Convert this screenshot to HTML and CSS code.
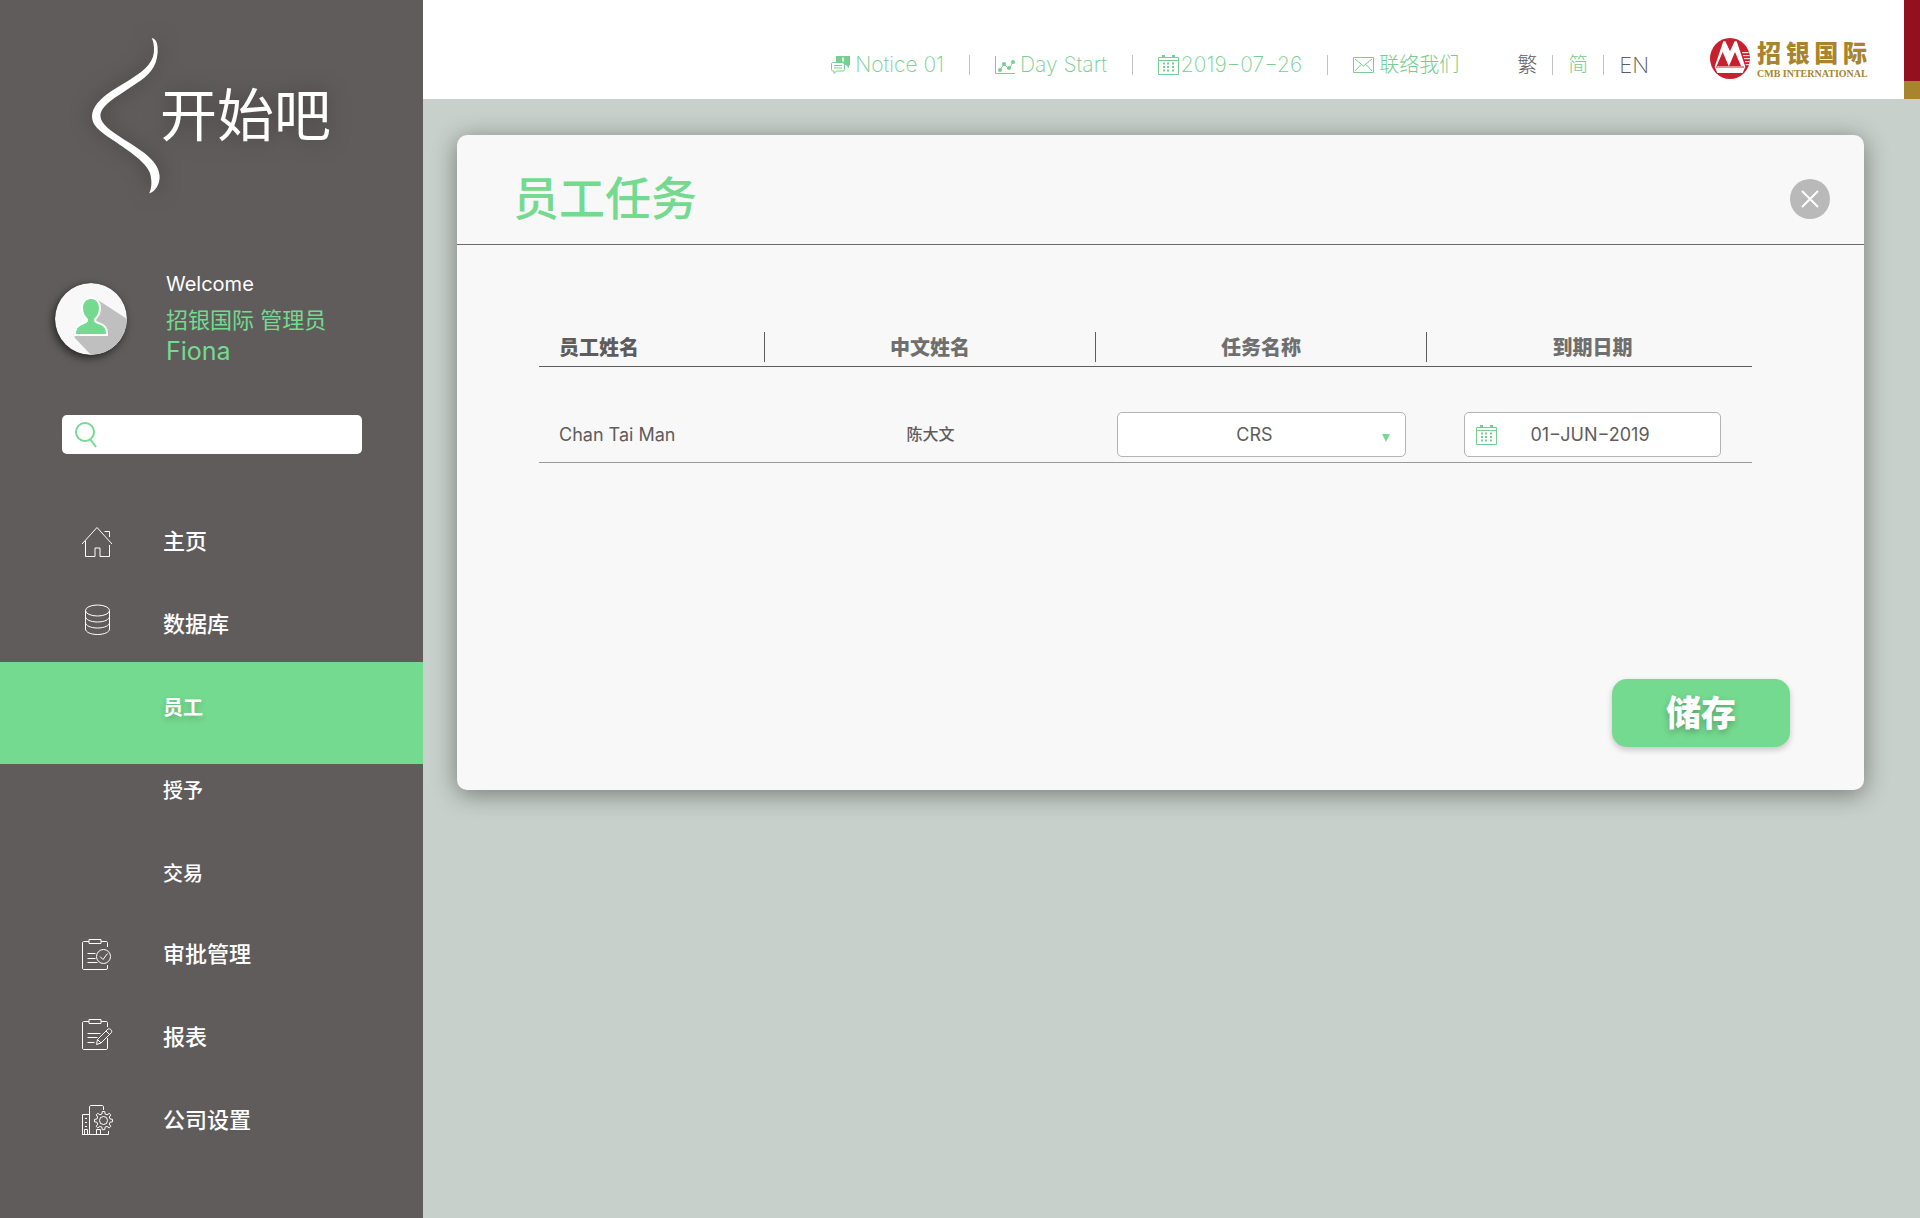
FILE: index.html
```html
<!DOCTYPE html>
<html lang="zh-CN">
<head>
<meta charset="utf-8">
<meta name="viewport" content="width=device-width, initial-scale=1">
<title>员工任务</title>
<link rel="stylesheet" href="styles.css">
</head>
<body>
<svg class="symbols" aria-hidden="true">
  <symbol id="calendar" viewBox="0 0 21 20">
    <path d="M.5 2.500h20v17H.5zM.5 5.500h20" fill="none" stroke="currentColor"/>
    <path d="M4 0h3v3H4zM14 0h3v3h-3z" fill="currentColor"/>
    <path d="M5 8.500h2M9 8.500h2M14 8.500h2M5 12h2M9 12h2M14 12h2M5 15.500h2M9 15.500h2M14 15.500h2" fill="none" stroke="currentColor" stroke-width="2"/>
  </symbol>
</svg>
<div class="app">
  <aside class="sidebar">
    <a class="logo" href="#">
      <svg class="logo-mark" viewBox="157 87 203 465" aria-hidden="true">
        <path fill="currentColor" d="M335 87C350 90 354 105 353 130C350 175 325 200 290 222L240 255C200 280 182 300 182 319C183 345 215 365 250 388C310 425 357 455 359 500C359 525 345 545 328 551C335 535 337 515 330 490C320 460 270 425 220 392C175 362 157 345 157 320C157 295 180 268 215 245L270 211C320 180 345 155 342 115C341 100 338 92 335 87Z"/>
      </svg>
      <span class="logo-text">开始吧</span>
    </a>

    <section class="profile">
      <svg class="avatar" viewBox="0 0 72 72" aria-hidden="true">
        <defs><clipPath id="disc"><circle cx="36" cy="36" r="36"/></clipPath></defs>
        <circle cx="36" cy="36" r="36" fill="#f8f8f8"/>
        <path clip-path="url(#disc)" d="M43 17L72 36V72H36L19 54L36 40Z" fill="#bfbfbf"/>
        <path d="M36 16c5 0 8 4 8 9 0 5-2 8-5 11 0 3 1 4 4 5 6 2 8 4 8 10H21c0-6 3-8 8-10 3-1 4-2 4-5-3-3-5-6-5-11 0-5 3-9 8-9z" fill="#74da8f" stroke="#fff" stroke-width="4" paint-order="stroke"/>
      </svg>
      <div class="profile-text">
        <p class="welcome">Welcome</p>
        <p class="role">招银国际 管理员</p>
        <p class="name">Fiona</p>
      </div>
    </section>

    <form class="search" role="search">
      <label for="search"><svg viewBox="0 0 22 26" role="img" aria-label="搜索"><circle cx="10" cy="10" r="9" fill="none" stroke="currentColor" stroke-width="2"/><path d="M15.500 17.500L21 25" fill="none" stroke="currentColor" stroke-width="2"/></svg></label>
      <input id="search" type="search">
    </form>

    <nav class="menu">
      <ul>
        <li><a href="#">
          <svg viewBox="0 0 32 40" aria-hidden="true"><path d="M1 23L16 6.500L31 23M4.500 20v15.500H14V27h5v8.500h9.500V24M23.500 10.500h5V16"/></svg>
          主页</a></li>
        <li><a href="#">
          <svg viewBox="0 0 32 40" aria-hidden="true"><ellipse cx="16.500" cy="6.500" rx="12" ry="5.500"/><path d="M4.500 6.500V25c0 3 5 5.500 12 5.500s12-2.500 12-5.500V6.500M4.500 12.500c0 3 5 5.500 12 5.500s12-2.500 12-5.500M4.500 18.500c0 3 5 5.500 12 5.500s12-2.500 12-5.500"/></svg>
          数据库</a>
          <ul class="submenu">
            <li class="active"><a href="#" aria-current="page">员工</a></li>
            <li><a href="#">授予</a></li>
            <li><a href="#">交易</a></li>
          </ul>
        </li>
        <li><a href="#">
          <svg viewBox="0 0 32 40" aria-hidden="true"><path d="M8 7.500H3c-1 0-1.500.5-1.500 1.500v25c0 1 .5 1.500 1.500 1.500h22c1 0 1.500-.5 1.500-1.500v-3M20 7.500h5c1 0 1.500.5 1.500 1.500v4M8 5.500h12v4H8zM6.500 19.500h8M6.500 24.500h8M6.500 28.500h10"/><circle cx="22.500" cy="22.500" r="7"/><path d="M19 22.500l3 3 4.500-6"/></svg>
          审批管理</a></li>
        <li><a href="#">
          <svg viewBox="0 0 32 40" aria-hidden="true"><path d="M8 4.500H3c-1 0-1.500.5-1.500 1.500v25c0 1 .5 1.500 1.500 1.500h22c1 0 1.500-.5 1.500-1.500V21M20 4.500h5c1 0 1.500.5 1.500 1.500v4M8 2.500h12v4H8zM6.500 16.500h13M6.500 20.500h10M6.500 25.500h7M15.500 27.500l1-5L27 12c2-1 4.500 1.500 3.500 3.500L20 26zM25 14l3.500 3.500M16.500 22.500L20 26"/></svg>
          报表</a></li>
        <li><a href="#">
          <svg viewBox="0 0 32 40" aria-hidden="true"><path d="M1 34.500h26.500V31M1.500 34V14.500h7M8.500 34V7c0-1 .5-1.500 1.500-1.500h11c1 0 1.500.5 1.500 1.500v3M3.500 34v-4.500h3V34M15.500 34v-4.500h4V34"/><path d="M5 18v9" stroke-width="2" stroke-dasharray="1 3"/><circle cx="22.500" cy="20.500" r="4"/><path d="M21.300 11.500h2.400l.4 2.500 2 .8 2.100-1.500 1.600 1.600-1.500 2.100.8 2 2.400.4v2.400l-2.400.4-.8 2 1.500 2.100-1.600 1.600-2.100-1.500-2 .8-.4 2.500h-2.400l-.4-2.500-2-.8-2.100 1.500-1.600-1.600 1.500-2.100-.8-2-2.400-.4v-2.400l2.400-.4.8-2-1.500-2.100 1.600-1.600 2.100 1.500 2-.8z"/></svg>
          公司设置</a></li>
      </ul>
    </nav>
  </aside>

  <div class="content">
    <header class="topbar">
      <div class="topbar-inner">
        <nav class="links">
          <a href="#"><svg class="notice-icon" viewBox="0 0 19 18" aria-hidden="true"><path d="M5 0h14v9h-1v3l-3-3H5z" fill="currentColor"/><path d="M12 1.500v4M12 6.500v1.500" stroke="#fff" stroke-width="1.500"/><path d="M2 6.500h10l1.500 2v5c0 1-.5 1.500-1.500 1.500H5.500L3 17.500V15H2C1 15 .5 14.500 .5 13.500V8C.5 7 1 6.500 2 6.500z" fill="#fff" stroke="currentColor"/><path d="M3 9.500h8M3 12h8" stroke="currentColor"/></svg>Notice 01</a>
          <a href="#"><svg class="chart-icon" viewBox="0 0 20 20" aria-hidden="true"><path d="M.5 1v17.500H20" fill="none" stroke="currentColor"/><path d="M5 15l4-6 5 5 4-7" fill="none" stroke="currentColor"/><g fill="currentColor"><circle cx="5" cy="15" r="2"/><circle cx="9" cy="9" r="2"/><circle cx="14" cy="13" r="2"/><circle cx="18" cy="7" r="2"/></g></svg>Day Start</a>
          <a class="date" href="#"><svg class="calendar-icon"><use href="#calendar"/></svg>2019−07−26</a>
          <a class="cjk" href="#"><svg class="mail-icon" viewBox="0 0 21 16" aria-hidden="true"><path d="M.5.5h20v15H.5zM2 2l8.500 7L19 2M2 14l6-6.500M19 14l-6-6.500" fill="none" stroke="currentColor"/></svg>联络我们</a>
        </nav>
        <nav class="languages">
          <a class="cjk" href="#">繁</a>
          <a class="cjk current" href="#">简</a>
          <a href="#">EN</a>
        </nav>
        <a class="bank" href="#">
          <svg class="bank-mark" viewBox="0 0 120 123" aria-hidden="true">
            <ellipse cx="60" cy="61.500" rx="60" ry="61.500" fill="#c8202f"/>
            <path d="M14 86L40 10H46L60 40L74 10H80L106 86L98 105H22Z" fill="#fff"/>
            <path d="M20 84L38 42L56 84zM57 84L75 42L93 84z" fill="#c8202f"/>
            <path d="M18 87H102" stroke="#c8202f" stroke-width="3"/>
            <path d="M96 44H116M99 53H119M102 62H120M105 71H119M107 80H117" stroke="#fff" stroke-width="3"/>
          </svg>
          <span class="bank-name">
            <span class="bank-cn"><span>招</span><span>银</span><span>国</span><span>际</span></span>
            <span class="bank-en">CMB INTERNATIONAL</span>
          </span>
        </a>
      </div>
      <div class="stripe"></div>
    </header>

    <main>
      <section class="panel">
        <header class="panel-head">
          <h1>员工任务</h1>
          <button class="close" type="button" aria-label="关闭"><svg viewBox="0 0 40 40" aria-hidden="true"><path d="M12 12l16 16M28 12L12 28" stroke="#fff" stroke-width="2"/></svg></button>
        </header>
        <form class="panel-body">
          <table>
            <colgroup><col class="c-name"><col class="c-mid"><col class="c-mid"><col></colgroup>
            <thead>
              <tr>
                <th scope="col"><span>员工姓名</span></th>
                <th scope="col"><span>中文姓名</span></th>
                <th scope="col" id="task-label"><span>任务名称</span></th>
                <th scope="col" id="due-label"><span>到期日期</span></th>
              </tr>
            </thead>
            <tbody>
              <tr>
                <td>Chan Tai Man</td>
                <td class="cn">陈大文</td>
                <td>
                  <div class="field task">
                    <select aria-labelledby="task-label"><option>CRS</option></select>
                    <svg class="arrow" viewBox="0 0 8 8" aria-hidden="true"><path d="M0 0h8L4 8z" fill="currentColor"/></svg>
                  </div>
                </td>
                <td>
                  <div class="field due">
                    <svg class="calendar-icon"><use href="#calendar"/></svg>
                    <input type="text" value="01−JUN−2019" aria-labelledby="due-label">
                  </div>
                </td>
              </tr>
            </tbody>
          </table>
          <div class="actions"><button class="save" type="submit">储存</button></div>
        </form>
      </section>
    </main>
  </div>
</div>
</body>
</html>
```
FILE: styles.css
```css
:root {
  --green: #74da8f;
  --link: #78cd90;
  --dark: #605c5c;
  --gold: #a8842f;
}

* { box-sizing: border-box; }

body {
  margin: 0;
  font-family: Inter, "Noto Sans CJK SC", sans-serif;
  font-size: 18px;
  color: var(--dark);
  background: #c8d0cb;
}

h1, p, ul { margin: 0; padding: 0; }
ul { list-style: none; }
a { color: inherit; text-decoration: none; }
button, input, select { font: inherit; color: inherit; }
.symbols { display: none; }

.app {
  display: flex;
  min-height: 100vh;
}

/* Sidebar */
.sidebar {
  flex: 0 0 423px;
  min-width: 0;
  padding-top: 38px;
  background: var(--dark);
  color: #fff;
}

.logo {
  display: flex;
  align-items: center;
  height: 156px;
  padding-left: 92px;
  filter: drop-shadow(0 0 10px rgba(50, 45, 40, .6));
}
.logo-mark { flex: none; width: 68px; height: 156px; }
.logo-text { font-size: 57px; font-weight: 400; line-height: 60px; }

.profile {
  display: flex;
  align-items: center;
  gap: 39px;
  padding-left: 55px;
  margin-top: 76px;
}
.avatar {
  width: 72px;
  height: 72px;
  margin-top: 2px;
  border-radius: 50%;
  box-shadow: -2px 3px 8px rgba(0, 0, 0, .6);
}
.welcome { font-size: 20px; line-height: 28px; margin-bottom: 6px; }
.role { font-size: 22px; line-height: 32px; color: var(--green); }
.name { font-size: 25px; line-height: 30px; color: var(--green); }

.search {
  display: flex;
  align-items: center;
  gap: 8px;
  height: 39px;
  margin: 49px 61px 0 62px;
  padding: 0 13px;
  border-radius: 5px;
  background: #fff;
  color: var(--green);
}
.search label { display: flex; }
.search svg { width: 22px; height: 26px; }
.search input {
  flex: 1;
  min-width: 0;
  border: 0;
  outline: 0;
  background: none;
  color: var(--dark);
}

.menu { margin-top: 46px; }
.menu a {
  display: flex;
  align-items: center;
  gap: 50px;
  height: 83px;
  padding: 0 0 6px 81px;
  font-size: 22px;
  font-weight: 500;
}
.menu svg {
  width: 32px;
  height: 40px;
  margin-top: 4px;
  fill: none;
  stroke: #fff;
}
.submenu { margin-bottom: -2px; }
.submenu a { padding: 0 0 3px 163px; font-size: 20px; }
.submenu .active {
  margin: -4px 0 -15px;
  padding: 4px 0 15px;
  background: var(--green);
}
.submenu .active a { font-weight: 700; text-shadow: 0 3px 6px rgba(0, 0, 0, .2); }

/* Top bar */
.content { flex: 1; min-width: 0; }
.topbar {
  display: flex;
  height: 99px;
  background: #fff;
}
.topbar-inner {
  flex: 1;
  display: flex;
  justify-content: flex-end;
  align-items: center;
  padding: 30px 37px 0 0;
}
.stripe {
  width: 16px;
  background: linear-gradient(#93111e 81px, var(--gold) 81px);
}
.links, .languages {
  display: flex;
  align-items: center;
  font-size: 21px;
  line-height: 20px;
  font-weight: 200;
}
.links .cjk, .languages .cjk { font-size: 20px; }
.links a {
  display: flex;
  align-items: center;
  gap: 5px;
  padding: 0 25px;
  color: var(--link);
}
.links .date { gap: 2px; }
.links a:last-child { padding-right: 0; }
.links a + a, .languages a + a { border-left: 1px solid #c0c4c1; }
.languages { margin-left: 58px; font-size: 22px; }
.languages a { padding: 0 15px; }
.languages a:first-child { padding-left: 0; }
.languages a:last-child { padding-right: 0; }
.languages .current { color: var(--link); }
.notice-icon { width: 19px; height: 18px; }
.chart-icon { width: 20px; height: 20px; }
.calendar-icon { width: 21px; height: 20px; color: var(--link); }
.mail-icon { width: 21px; height: 16px; }

.bank {
  display: flex;
  gap: 7px;
  margin: -13px 0 0 61px;
  color: var(--gold);
}
.bank-mark { width: 40px; height: 41px; }
.bank-name { display: flex; flex-direction: column; width: 110px; }
.bank-cn {
  display: flex;
  justify-content: space-between;
  font-size: 24px;
  line-height: 32px;
  font-weight: 900;
}
.bank-en {
  font: bold 10px/8px "Liberation Serif", serif;
  white-space: nowrap;
}

/* Task panel */
main { padding: 36px 56px 36px 34px; }
.panel {
  border-radius: 10px;
  background: #f8f8f8;
  box-shadow: 0 4px 24px rgba(0, 0, 0, .42);
}
.panel-head {
  display: flex;
  justify-content: space-between;
  align-items: center;
  height: 110px;
  padding: 16px 34px 0 56px;
  border-bottom: 1px solid #6b696a;
}
h1 {
  font-size: 46px;
  line-height: 60px;
  font-weight: 500;
  color: var(--green);
}
.close {
  width: 40px;
  height: 40px;
  margin-top: 2px;
  padding: 0;
  border: 0;
  border-radius: 50%;
  background: #b9b9b9;
}
.close svg { display: block; }

.panel-body { padding: 87px 112px 43px 82px; }
table {
  width: 100%;
  table-layout: fixed;
  border-spacing: 0;
}
.c-name { width: 226px; }
.c-mid { width: 331px; }
th {
  padding: 0 0 4px;
  border-bottom: 1px solid var(--dark);
  font-size: 20px;
  font-weight: 900;
  color: #6f6f6f;
}
th span {
  display: block;
  height: 30px;
  line-height: 32px;
  border-right: 1px solid var(--dark);
}
th:last-child span { border-right: 0; }
th:first-child { text-align: left; color: var(--dark); }
th:first-child span, td:first-child { padding-left: 20px; }
td {
  height: 96px;
  padding: 45px 0 5px;
  border-bottom: 1px solid #9a9a9a;
  vertical-align: middle;
}
th:last-child, td:last-child { padding-left: 6px; }
td.cn { padding-bottom: 8px; font-size: 16px; font-weight: 500; text-align: center; }

.field {
  position: relative;
  display: flex;
  align-items: center;
  height: 45px;
  margin: 0 auto;
  border: 1px solid #b4b4b4;
  border-radius: 5px;
  background: #fff;
}
.task { max-width: 289px; }
.due { max-width: 257px; padding: 0 11px; }
.field select, .field input {
  width: 100%;
  height: 100%;
  min-width: 0;
  padding: 0;
  border: 0;
  outline: 0;
  background: none;
  appearance: none;
  text-align: center;
}
.field select { padding-right: 14px; text-align-last: center; }
.field input { padding-right: 26px; }
.field .calendar-icon { flex: none; }
.arrow {
  position: absolute;
  right: 15px;
  top: 21px;
  width: 8px;
  height: 8px;
  color: var(--green);
  pointer-events: none;
}

.actions {
  display: flex;
  justify-content: flex-end;
  margin: 216px -38px 0 0;
}
.save {
  width: 178px;
  height: 68px;
  padding: 0 0 6px;
  border: 0;
  border-radius: 15px;
  background: var(--green);
  box-shadow: 0 3px 6px rgba(0, 0, 0, .2);
  font-size: 35px;
  font-weight: 900;
  color: #fff;
  text-shadow: 0 3px 6px rgba(0, 0, 0, .25);
}
```
